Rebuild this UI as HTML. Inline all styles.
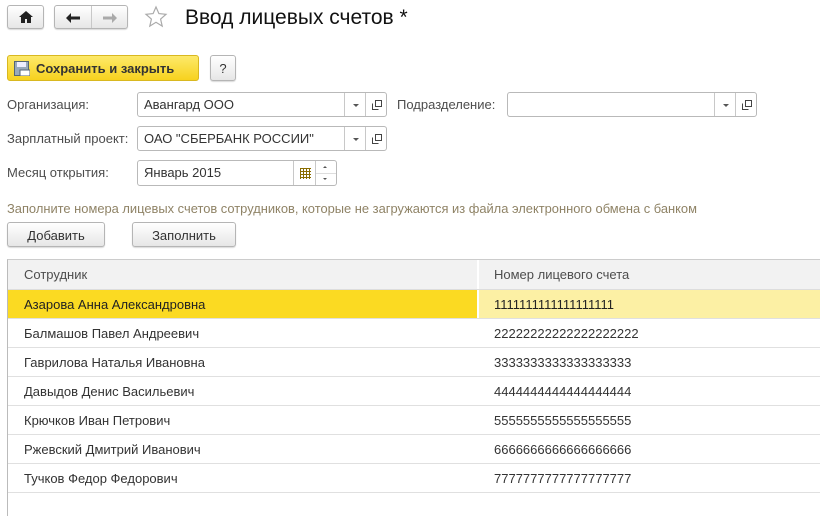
<!DOCTYPE html>
<html><head><meta charset="utf-8"><style>
*{box-sizing:border-box}
body{margin:0;width:820px;height:516px;overflow:hidden;background:#fff;font-family:"Liberation Sans",Arial,sans-serif;font-size:13px;color:#333;position:relative}
.a{position:absolute}
.btn{position:absolute;border:1px solid #b5b5b5;border-radius:3px;background:linear-gradient(#fff,#e6e6e6);box-shadow:0 1px 1px rgba(0,0,0,.15);text-align:center;color:#333}
.lbl{position:absolute;color:#4d4d4d;font-size:13px}
.fld{position:absolute;border:1px solid #b9b9b9;border-radius:3px;background:#fff;height:25px;font-size:13px;color:#333;padding:4px 6px}
.sep{position:absolute;top:0;bottom:0;border-left:1px solid #c8c8c8}
.dd{position:absolute;top:11px;width:0;height:0;border-left:3px solid transparent;border-right:3px solid transparent;border-top:3px solid #555}
.row{position:absolute;left:8px;right:0;height:29px;border-bottom:1px solid #e0e0e0;font-size:13px;color:#333}
.row span{position:absolute;top:7px}
</style></head><body>
<div class="btn" style="left:7px;top:5px;width:37px;height:24px"><svg width="14" height="12" viewBox="0 0 14 12" style="margin-top:5px"><path d="M7 0L0 6h2v6h4V8h2v4h4V6h2z" fill="#222"/></svg></div>
<div class="btn" style="left:54px;top:5px;width:74px;height:24px"><div class="sep" style="left:36px"></div>
<svg width="14" height="12" viewBox="0 0 14 12" class="a" style="left:11px;top:6px"><path d="M0 6L5 1v3.5h9v3H5V11z" fill="#222"/></svg>
<svg width="14" height="12" viewBox="0 0 14 12" class="a" style="left:48px;top:6px"><path d="M14 6L9 1v3.5H0v3h9V11z" fill="#aaa"/></svg></div>
<svg class="a" style="left:144px;top:5px" width="24" height="24" viewBox="0 0 24 24"><path d="M12 2l2.9 6.6 7.1.7-5.4 4.8 1.6 7L12 17.3 5.8 21.1l1.6-7L2 9.3l7.1-.7z" fill="none" stroke="#aaa" stroke-width="1.2"/></svg>
<div class="a" style="left:185px;top:6px;font-size:21px;color:#111">Ввод лицевых счетов *</div>
<div class="a" style="left:7px;top:55px;width:192px;height:26px;border:1px solid #d9b820;border-radius:3px;background:linear-gradient(#fde96a,#f7d21e);font-weight:bold;font-size:13px;color:#333;padding:5px 0 0 28px">Сохранить и закрыть</div>
<svg class="a" style="left:14px;top:61px" width="16" height="15" viewBox="0 0 16 15"><rect x="0.5" y="0.5" width="14" height="14" fill="#9ab" stroke="#567"/><rect x="3" y="1" width="9" height="5" fill="#eef"/><rect x="6" y="9" width="10" height="6" fill="#fff" stroke="#567"/></svg>
<div class="btn" style="left:210px;top:55px;width:26px;height:26px;padding-top:5px">?</div>

<div class="lbl" style="left:7px;top:97px">Организация:</div>
<div class="fld" style="left:137px;top:92px;width:250px">Авангард ООО<div class="sep" style="left:206px"></div><div class="dd" style="left:215px"></div><div class="sep" style="left:227px"></div><svg class="a" style="left:234px;top:7px" width="10" height="10" viewBox="0 0 10 10"><path d="M3.5.5h6v6h-6zM.5 3.5v6h6" fill="none" stroke="#444"/></svg></div>
<div class="lbl" style="left:397px;top:97px">Подразделение:</div>
<div class="fld" style="left:507px;top:92px;width:250px"><div class="sep" style="left:206px"></div><div class="dd" style="left:215px"></div><div class="sep" style="left:227px"></div><svg class="a" style="left:234px;top:7px" width="10" height="10" viewBox="0 0 10 10"><path d="M3.5.5h6v6h-6zM.5 3.5v6h6" fill="none" stroke="#444"/></svg></div>

<div class="lbl" style="left:7px;top:131px">Зарплатный проект:</div>
<div class="fld" style="left:137px;top:126px;width:250px">ОАО "СБЕРБАНК РОССИИ"<div class="sep" style="left:206px"></div><div class="dd" style="left:215px"></div><div class="sep" style="left:227px"></div><svg class="a" style="left:234px;top:7px" width="10" height="10" viewBox="0 0 10 10"><path d="M3.5.5h6v6h-6zM.5 3.5v6h6" fill="none" stroke="#444"/></svg></div>

<div class="lbl" style="left:7px;top:165px">Месяц открытия:</div>
<div class="fld" style="left:137px;top:160px;width:200px;height:26px">Январь 2015<div class="sep" style="left:155px"></div>
<svg class="a" style="left:162px;top:7px" width="11" height="11" viewBox="0 0 11 11"><path d="M0 .5h11M0 3.5h11M0 6.5h11M0 9.5h11M.5 0v11M3.5 0v11M6.5 0v11M9.5 0v11" stroke="#8a6d00"/></svg>
<div class="sep" style="left:177px"></div><div class="a" style="left:178px;right:0;top:12px;border-top:1px solid #ddd"></div>
<div class="a" style="left:185px;top:5px;border-left:2px solid transparent;border-right:2px solid transparent;border-bottom:2px solid #555"></div>
<div class="a" style="left:185px;top:17px;border-left:2px solid transparent;border-right:2px solid transparent;border-top:2px solid #555"></div></div>

<div class="a" style="left:7px;top:201px;color:#8f8366;font-size:12.9px">Заполните номера лицевых счетов сотрудников, которые не загружаются из файла электронного обмена с банком</div>
<div class="btn" style="left:7px;top:222px;width:98px;height:25px;padding-top:5px">Добавить</div>
<div class="btn" style="left:132px;top:222px;width:104px;height:25px;padding-top:5px">Заполнить</div>

<div class="a" style="left:7px;top:259px;right:0;bottom:0;border-left:1px solid #bbb;border-top:1px solid #ccc"></div>
<div class="a" style="left:8px;top:260px;right:0;height:30px;background:#f2f2f2;border-bottom:1px solid #ddd;color:#4d4d4d">
<span class="a" style="left:16px;top:7px">Сотрудник</span><div class="a" style="left:469px;top:0;bottom:0;border-left:2px solid #fff"></div><span class="a" style="left:486px;top:7px">Номер лицевого счета</span></div>
<div class="row" style="top:290px"><div class="a" style="left:0;width:469px;top:0;bottom:0;background:#fbda22"></div><div class="a" style="left:471px;right:0;top:0;bottom:0;background:#fcf0a4"></div><span style="left:16px;color:#222">Азарова Анна Александровна</span><span style="left:486px;color:#222">1111111111111111111</span></div>
<div class="row" style="top:319px"><span style="left:16px">Балмашов Павел Андреевич</span><span style="left:486px">22222222222222222222</span></div>
<div class="row" style="top:348px"><span style="left:16px">Гаврилова Наталья Ивановна</span><span style="left:486px">3333333333333333333</span></div>
<div class="row" style="top:377px"><span style="left:16px">Давыдов Денис Васильевич</span><span style="left:486px">4444444444444444444</span></div>
<div class="row" style="top:406px"><span style="left:16px">Крючков Иван Петрович</span><span style="left:486px">5555555555555555555</span></div>
<div class="row" style="top:435px"><span style="left:16px">Ржевский Дмитрий Иванович</span><span style="left:486px">6666666666666666666</span></div>
<div class="row" style="top:464px"><span style="left:16px">Тучков Федор Федорович</span><span style="left:486px">7777777777777777777</span></div>
</body></html>
